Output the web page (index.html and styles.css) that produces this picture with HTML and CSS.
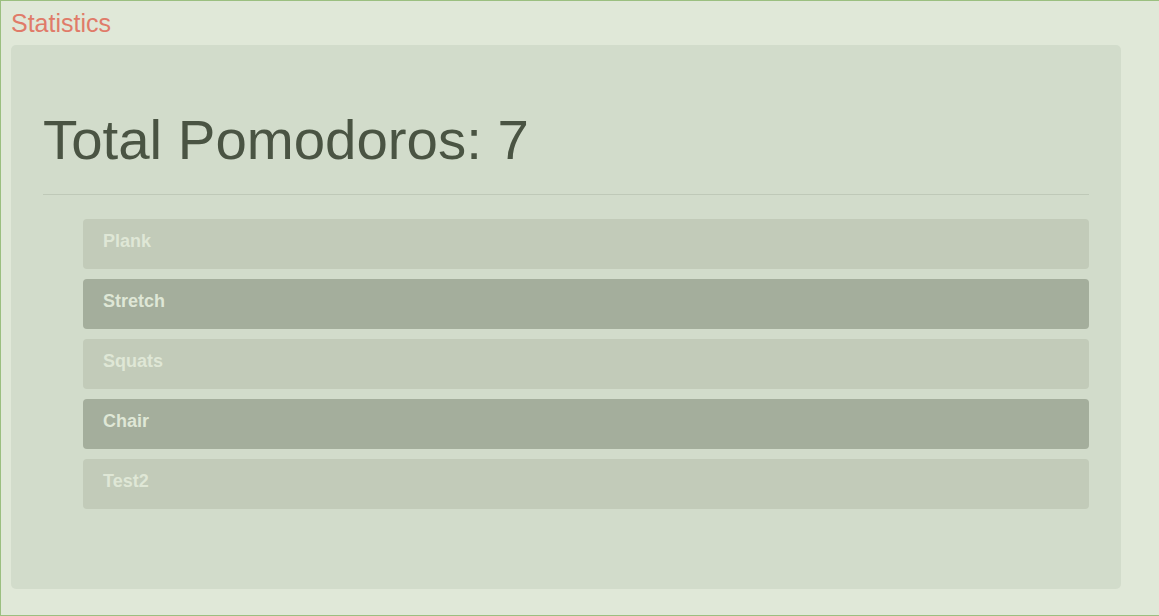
FILE: index.html
```html
<!DOCTYPE html>
<html>
<head>
<meta charset="utf-8">
<title>Statistics</title>
<link rel="stylesheet" href="styles.css">
</head>
<body>
<div class="page">
  <div class="title">Statistics</div>
  <div class="jumbotron">
    <h1 class="total">Total Pomodoros: 7</h1>
    <hr class="divider">
    <ul class="tasks">
      <li class="task task-light">Plank</li>
      <li class="task task-dark">Stretch</li>
      <li class="task task-light">Squats</li>
      <li class="task task-dark">Chair</li>
      <li class="task task-light">Test2</li>
    </ul>
  </div>
</div>
</body>
</html>
```

FILE: styles.css
```css
html, body {
  margin: 0;
  padding: 0;
  background: #e0e8d8;
}
body {
  font-family: "Liberation Sans", Arial, sans-serif;
}
.page {
  box-sizing: border-box;
  height: 616px;
  border: 1px solid #9bbf80;
  border-right: none;
  padding: 7px 10px 0;
  background: #e0e8d8;
}
.title {
  font-size: 25px;
  line-height: 30px;
  color: #e07b69;
  margin: 0 0 7px;
}
.jumbotron {
  box-sizing: border-box;
  width: 1110px;
  padding: 64px 32px;
  background: #d2dccb;
  border-radius: 5px;
}
.total {
  margin: 0;
  font-size: 56.4px;
  line-height: 62px;
  font-weight: normal;
  color: #4a5443;
}
.divider {
  margin: 23px 0 24px;
  border: 0;
  border-top: 1px solid #bfc9b8;
  height: 0;
}
.tasks {
  list-style: none;
  margin: 0 0 16px;
  padding: 0 0 0 40px;
  display: flex;
  flex-direction: column;
  gap: 10px;
}
.task {
  box-sizing: border-box;
  height: 50px;
  padding: 10px 20px 0;
  font-size: 18px;
  line-height: 24px;
  font-weight: bold;
  color: #dfe7d6;
  border-radius: 4px;
}
.task-light {
  background: #c2cbb9;
}
.task-dark {
  background: #a4ae9c;
}
```
